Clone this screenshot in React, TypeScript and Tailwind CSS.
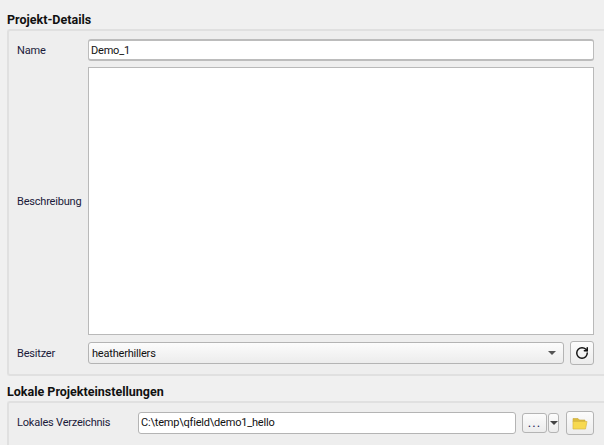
import React from "react";
import { RotateCw } from "lucide-react";

// Qt style group title
const GroupTitle = ({ children, className }: { children: React.ReactNode; className: string }) => (
  <div className={`pl-[7px] font-bold text-[12.5px] leading-[16px] tracking-normal text-[#111] ${className}`}>{children}</div>
);

const Label = ({ children, className }: { children: React.ReactNode; className: string }) => (
  <div className={`shrink-0 text-[#1a1a3a] ${className}`}>{children}</div>
);

const App: React.FC = () => {
  return (
    <div
      className="w-[604px] h-[445px] overflow-hidden bg-[#f0f0f0] text-[11px] tracking-[-0.2px]"
      style={{ fontFamily: 'Roboto, "Noto Sans", sans-serif' }}
    >
      <GroupTitle className="pt-[12px] h-[29px]">Projekt-Details</GroupTitle>

      {/* Projekt-Details box */}
      <div className="ml-[7px] h-[347px] border-t-2 border-l-2 border-b-2 border-[#e0e0e0] rounded-tl-[3px] rounded-bl-[3px] bg-[#eeeeee] pt-[8px] pl-[8px] pr-[10px] flex flex-col">
        <div className="flex items-center h-[22px]">
          <Label className="w-[71px] pt-[3px]">Name</Label>
          <div className="flex-1 h-[22px] bg-white border-y-2 border-x border-[#bcbcbc] rounded-[3px] pl-[2px] pt-[2px] flex items-center text-[#111]">
            Demo_1
          </div>
        </div>
        <div className="flex items-center h-[268px] mt-[6px]">
          <Label className="w-[71px] pt-[3px]">Beschreibung</Label>
          <div className="flex-1 h-full bg-white border border-[#b9b9b9]" />
        </div>
        <div className="flex items-center h-[24px] mt-[6px]">
          <Label className="w-[71px] pt-[2px]">Besitzer</Label>
          <div className="flex-1 h-[22px] border border-[#b4b4b4] rounded-[3px] bg-gradient-to-b from-[#fcfcfc] to-[#ececec] pl-[3px] pr-[7px] flex items-center justify-between text-[#111]">
            <span className="pt-[2px]">heatherhillers</span>
            <div className="w-0 h-0 border-l-[4px] border-r-[4px] border-t-[4px] border-l-transparent border-r-transparent border-t-[#555]" />
          </div>
          <button className="ml-[6px] w-[24px] h-[24px] border border-[#b4b4b4] rounded-[3px] bg-gradient-to-b from-[#fcfcfc] to-[#ececec] flex items-center justify-center">
            <RotateCw className="w-[14px] h-[14px] text-[#111]" strokeWidth={2.5} />
          </button>
        </div>
      </div>

      <GroupTitle className="pt-[8px] h-[25px]">Lokale Projekteinstellungen</GroupTitle>

      {/* Lokale Projekteinstellungen box */}
      <div className="ml-[7px] h-[60px] border-t-2 border-l-2 border-[#e0e0e0] rounded-tl-[3px] bg-[#eeeeee] pt-[8px] pl-[8px] pr-[10px]">
        <div className="flex items-center h-[24px]">
          <Label className="w-[121px] pt-[1px]">Lokales Verzeichnis</Label>
          <div className="w-[378px] h-[22px] bg-white border border-[#b4b4b4] rounded-[3px] pl-[2px] pt-[1px] flex items-center text-[#111]">
            C:\temp\qfield\demo1_hello
          </div>
          <button className="ml-[6px] w-[25px] h-[20px] border border-[#b4b4b4] rounded-[3px] bg-gradient-to-b from-[#fcfcfc] to-[#ececec] flex items-center justify-center text-[#1a1a5a] text-[13px] tracking-[1px] leading-none pb-[1px]">
            ...
          </button>
          <button className="ml-[1px] w-[11px] h-[20px] border border-[#b4b4b4] rounded-[3px] bg-gradient-to-b from-[#fcfcfc] to-[#ececec] flex items-center justify-center">
            <div className="w-0 h-0 border-l-[4px] border-r-[4px] border-t-[4px] border-l-transparent border-r-transparent border-t-[#444]" />
          </button>
          <button className="ml-[7px] w-[28px] h-[24px] border border-[#b4b4b4] rounded-[3px] bg-gradient-to-b from-[#fcfcfc] to-[#ececec] flex items-center justify-center">
            <svg width="16" height="13" viewBox="0 0 16 13">
              <path d="M1 1.5 H6 L7.5 3 H13 V5 H1 Z" fill="#dcbc3e" stroke="#c9a93a" strokeWidth="0.6" />
              <path d="M1 12 L1 4.5 H15 L13.5 12 Z" fill="#f7d950" stroke="#d8b945" strokeWidth="0.7" />
            </svg>
          </button>
        </div>
      </div>
    </div>
  );
};

export default App;
